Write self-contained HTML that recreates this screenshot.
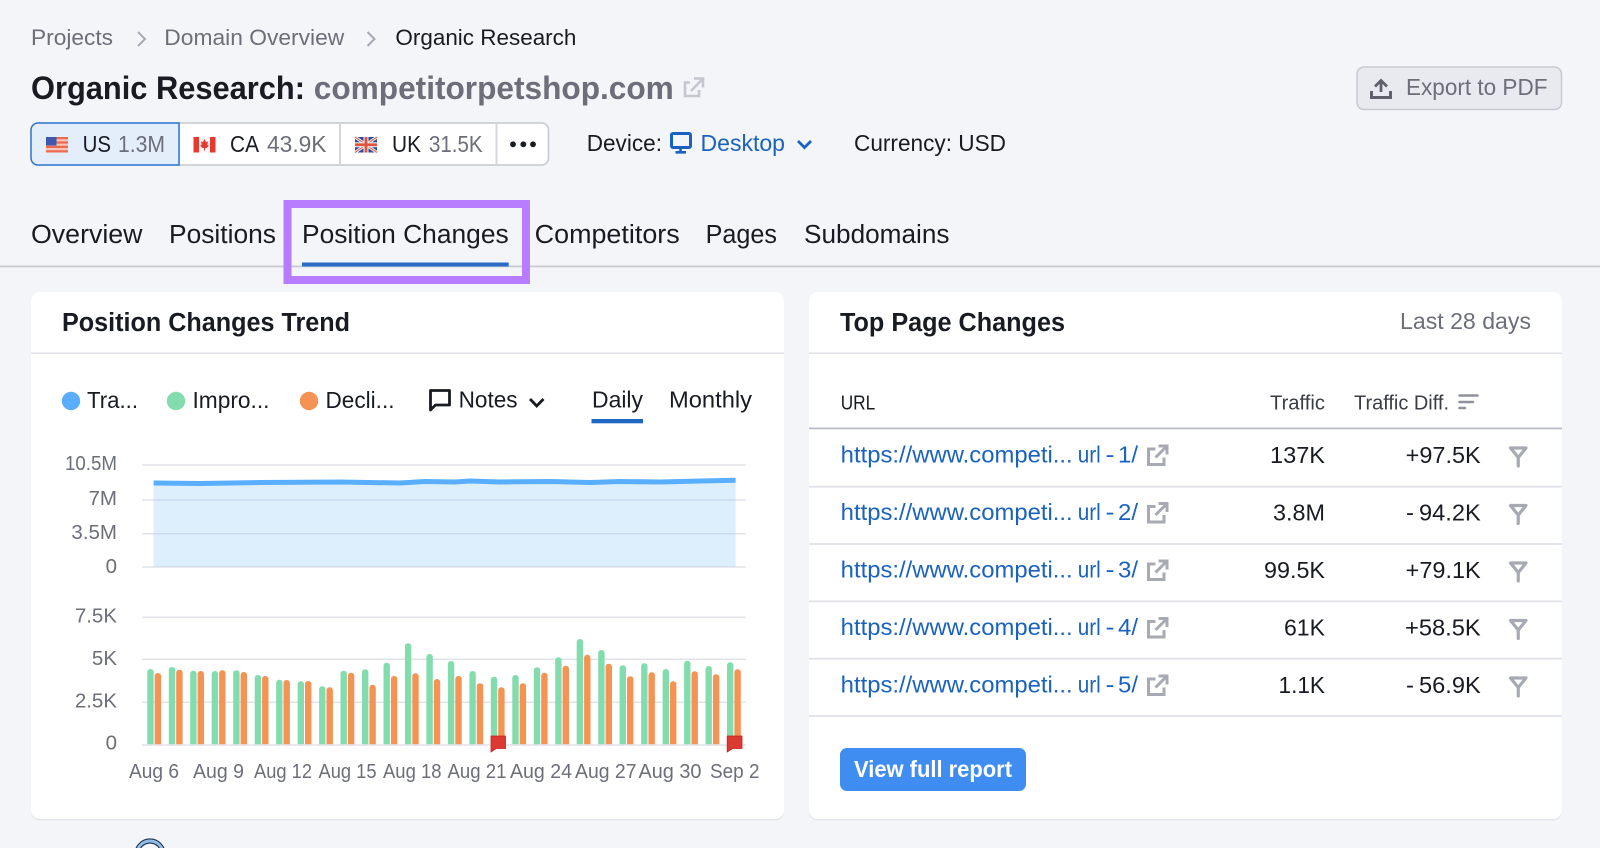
<!DOCTYPE html>
<html lang="en"><head><meta charset="utf-8"><title>Organic Research: competitorpetshop.com</title>
<style>
html,body{margin:0;padding:0;width:1600px;height:848px;overflow:hidden;background:#f4f5f9}
svg{display:block;position:absolute;left:0;top:0}
text{font-family:"Liberation Sans",sans-serif;fill:#191b23}
.b{font-size:22.5px;fill:#6c6e79}
.t{font-size:25.5px}
.h{font-size:25.5px;font-weight:700}
.c{font-size:23.5px}
.g{fill:#6c6e79}
.ax{font-size:20.5px;fill:#6c6e79}
.u{font-size:23px;fill:#1a62c0}
.v{font-size:23px;fill:#191b23}
.th{font-size:20.5px}
.ic{fill:none;stroke:#a8aab3;stroke-width:3}
</style></head><body>
<svg width="1600" height="848" viewBox="0 0 1600 848" xmlns="http://www.w3.org/2000/svg">
<defs>
<clipPath id="bc"><rect x="140" y="600" width="610" height="145"/></clipPath>
<g id="ext"><path class="ic" d="M12 2.500H20.500V11M20 3L9 14M9 5.500H2V21H17.500V14"/></g>
<g id="fil"><path d="M1.500 2H17L9.250 11.500Z M9.250 11.500V20" fill="none" stroke="#a8aab3" stroke-width="3.200" stroke-linejoin="round" stroke-linecap="round"/></g>
<g id="dash"><rect x="0" y="0" width="6" height="2" fill="#1a62c0"/></g>
</defs>

<!-- breadcrumb -->
<text class="b" x="31" y="45" textLength="82" lengthAdjust="spacingAndGlyphs">Projects</text>
<path d="M138 32L145 39L138 46" fill="none" stroke="#a8aab3" stroke-width="2"/>
<text class="b" x="164.300" y="45" textLength="180" lengthAdjust="spacingAndGlyphs">Domain Overview</text>
<path d="M367.500 32L374.500 39L367.500 46" fill="none" stroke="#a8aab3" stroke-width="2"/>
<text class="b" x="395.400" y="45" textLength="181" lengthAdjust="spacingAndGlyphs" style="fill:#191b23">Organic Research</text>

<!-- title -->
<text x="31" y="99" font-size="32.500" font-weight="700" textLength="274" lengthAdjust="spacingAndGlyphs">Organic Research:</text>
<text x="313.800" y="99" font-size="32.500" font-weight="700" textLength="360" lengthAdjust="spacingAndGlyphs" style="fill:#6c6e79">competitorpetshop.com</text>
<path d="M694 78.500H703V87.500M702.500 79L691 91M690 82.500H685V96H699V90" fill="none" stroke="#c4c7cf" stroke-width="2.600"/>

<!-- country selector -->
<rect x="31" y="123" width="517.500" height="42" rx="7" fill="#fff" stroke="#c4c7cf" stroke-width="1.500"/>
<path d="M179 123V165M340 123V165M496.500 123V165" stroke="#d5d7de" stroke-width="2"/>
<path d="M38 123H179V165H38A7 7 0 0 1 31 158V130A7 7 0 0 1 38 123Z" fill="#e4eefa" stroke="#2f77cf" stroke-width="1.500"/>
<!-- US flag -->
<rect x="46" y="137" width="22" height="15.500" fill="#f6c5b8"/>
<path d="M46 137H68V139.200H46ZM46 141.400H68V143.600H46ZM46 145.800H68V148H46ZM46 150.200H68V152.500H46Z" fill="#ec6a50"/>
<rect x="46" y="137" width="10.500" height="8.500" fill="#3f58ad"/>
<!-- CA flag -->
<rect x="193.500" y="137" width="22" height="15.500" fill="#f5f5f5"/>
<rect x="193.500" y="137" width="5.500" height="15.500" fill="#e53a2d"/>
<rect x="210" y="137" width="5.500" height="15.500" fill="#e53a2d"/>
<path d="M204.500 139L206 142L208 141.500L207.300 145L209 145.500L206.500 148H205V150.500H204V148H202.500L200 145.500L201.700 145L201 141.500L203 142Z" fill="#e53a2d"/>
<!-- UK flag -->
<rect x="355" y="137" width="22" height="15.500" fill="#2b4a9e"/>
<path d="M355 137L377 152.500M377 137L355 152.500" stroke="#eee" stroke-width="3"/>
<path d="M355 137L377 152.500M377 137L355 152.500" stroke="#e0533f" stroke-width="1"/>
<path d="M366 137V152.500M355 144.750H377" stroke="#eee" stroke-width="5"/>
<path d="M366 137V152.500M355 144.750H377" stroke="#e0533f" stroke-width="2.800"/>

<text class="c" x="82.600" y="152" textLength="28.400" lengthAdjust="spacingAndGlyphs">US</text>
<text class="c g" x="118" y="152" textLength="47" lengthAdjust="spacingAndGlyphs">1.3M</text>
<text class="c" x="230" y="152" textLength="29" lengthAdjust="spacingAndGlyphs">CA</text>
<text class="c g" x="267" y="152" textLength="59.500" lengthAdjust="spacingAndGlyphs">43.9K</text>
<text class="c" x="392" y="152" textLength="29" lengthAdjust="spacingAndGlyphs">UK</text>
<text class="c g" x="429" y="152" textLength="53.600" lengthAdjust="spacingAndGlyphs">31.5K</text>
<circle cx="513" cy="144.300" r="2.900" fill="#191b23"/><circle cx="523.300" cy="144.300" r="2.900" fill="#191b23"/><circle cx="533" cy="144.300" r="2.900" fill="#191b23"/>

<text class="c" x="586.700" y="151" textLength="75.300" lengthAdjust="spacingAndGlyphs">Device:</text>
<rect x="671.500" y="133.500" width="19" height="14" rx="1.500" fill="none" stroke="#1a62c0" stroke-width="3"/>
<path d="M680.500 148V151.500M675.500 152.300H686" stroke="#1a62c0" stroke-width="2.600"/>
<text class="c" x="700.500" y="151" textLength="84.500" lengthAdjust="spacingAndGlyphs" style="fill:#1a62c0">Desktop</text>
<path d="M798 141L804.500 147.500L811 141" fill="none" stroke="#1a62c0" stroke-width="2.800"/>
<text class="c" x="854" y="151" textLength="152" lengthAdjust="spacingAndGlyphs">Currency: USD</text>

<!-- export -->
<rect x="1357" y="67" width="204.500" height="42.500" rx="7" fill="#e9eaef" stroke="#c8cad2" stroke-width="1.500"/>
<path d="M1381 92V81M1375 86.500L1381 80.500L1387 86.500" fill="none" stroke="#5f616c" stroke-width="2.800"/>
<path d="M1371.500 91V97.500H1390.500V91" fill="none" stroke="#5f616c" stroke-width="3"/>
<text class="c g" x="1406" y="95" textLength="141.500" lengthAdjust="spacingAndGlyphs">Export to PDF</text>

<!-- tabs -->
<rect x="0" y="265.500" width="1600" height="1.800" fill="#c8cad2"/>
<rect x="287.500" y="204" width="238.500" height="76" fill="none" stroke="#b77cff" stroke-width="8"/>
<text class="t" x="31" y="243" textLength="111.500" lengthAdjust="spacingAndGlyphs">Overview</text>
<text class="t" x="169" y="243" textLength="107" lengthAdjust="spacingAndGlyphs">Positions</text>
<text class="t" x="302" y="243" textLength="206.700" lengthAdjust="spacingAndGlyphs">Position Changes</text>
<text class="t" x="534.700" y="243" textLength="145" lengthAdjust="spacingAndGlyphs">Competitors</text>
<text class="t" x="705.600" y="243" textLength="71.400" lengthAdjust="spacingAndGlyphs">Pages</text>
<text class="t" x="804" y="243" textLength="145.500" lengthAdjust="spacingAndGlyphs">Subdomains</text>
<rect x="302" y="262.500" width="206.700" height="4" fill="#2a6cc4"/>

<!-- left card -->
<rect x="31" y="293" width="753" height="526" rx="9" fill="#e4e5ea" transform="translate(0 1.500)"/>
<rect x="31" y="292" width="753" height="527" rx="9" fill="#fff"/>
<rect x="31" y="352.500" width="753" height="1.500" fill="#e0e1e9"/>
<text class="h" x="62" y="331" textLength="288" lengthAdjust="spacingAndGlyphs">Position Changes Trend</text>

<circle cx="71" cy="401" r="9.200" fill="#5aaeff"/>
<text class="c" x="87" y="408" textLength="51" lengthAdjust="spacingAndGlyphs">Tra...</text>
<circle cx="176" cy="401" r="9.200" fill="#83dcae"/>
<text class="c" x="192.500" y="408" textLength="77" lengthAdjust="spacingAndGlyphs">Impro...</text>
<circle cx="309" cy="401" r="9.200" fill="#f59354"/>
<text class="c" x="325.500" y="408" textLength="69" lengthAdjust="spacingAndGlyphs">Decli...</text>
<path d="M430.500 390.500H449.500V405H435.500L430.500 410Z" fill="none" stroke="#191b23" stroke-width="2.800" stroke-linejoin="round"/>
<text class="c" x="458.600" y="407.500" textLength="59" lengthAdjust="spacingAndGlyphs">Notes</text>
<path d="M530 399L536.700 406L543.500 399" fill="none" stroke="#191b23" stroke-width="2.800"/>
<text class="c" x="592" y="407.500" textLength="51" lengthAdjust="spacingAndGlyphs">Daily</text>
<text class="c" x="669" y="407.500" textLength="83" lengthAdjust="spacingAndGlyphs">Monthly</text>
<rect x="591.500" y="419" width="51.500" height="4.300" fill="#1f66c4"/>

<!-- top chart -->
<path d="M142 465H746M142 500H746M142 533.700H746M142 567H746" stroke="#e2e3ea" stroke-width="1.500"/>
<path d="M153.600 483L200 483.500L260 482.500L340 482L400 483L425 481.500L455 482L470 481L500 482L550 481.500L590 482.500L620 481.500L660 482L700 481L735.600 480.200V567H153.600Z" fill="#a6d2fb" fill-opacity=".38"/>
<path d="M153.600 483L200 483.500L260 482.500L340 482L400 483L425 481.500L455 482L470 481L500 482L550 481.500L590 482.500L620 481.500L660 482L700 481L735.600 480.200" fill="none" stroke="#5aaeff" stroke-width="5"/>
<g class="ax" text-anchor="end">
<text class="ax" x="117" y="470" textLength="52" lengthAdjust="spacingAndGlyphs">10.5M</text>
<text class="ax" x="117" y="505">7M</text>
<text class="ax" x="117" y="539">3.5M</text>
<text class="ax" x="117" y="573">0</text>
<text class="ax" x="117" y="622.500">7.5K</text>
<text class="ax" x="117" y="665">5K</text>
<text class="ax" x="117" y="707.700">2.5K</text>
<text class="ax" x="117" y="749.500">0</text>
</g>

<!-- bottom chart -->
<path d="M142 617.300H746M142 659.300H746M142 702.300H746" stroke="#e2e3ea" stroke-width="1.500"/>
<g clip-path="url(#bc)">
<g fill="#83dcae">
<rect x="147.300" y="669" width="6.400" height="110" rx="3"/><rect x="168.800" y="667" width="6.400" height="110" rx="3"/><rect x="190.200" y="670.700" width="6.400" height="110" rx="3"/><rect x="211.700" y="671" width="6.400" height="110" rx="3"/><rect x="233.200" y="670.300" width="6.400" height="110" rx="3"/><rect x="254.700" y="675" width="6.400" height="110" rx="3"/><rect x="276.100" y="679.700" width="6.400" height="110" rx="3"/><rect x="297.600" y="681.300" width="6.400" height="110" rx="3"/><rect x="319.100" y="686.300" width="6.400" height="110" rx="3"/><rect x="340.500" y="670.700" width="6.400" height="110" rx="3"/><rect x="362" y="669.300" width="6.400" height="110" rx="3"/><rect x="383.500" y="662.700" width="6.400" height="110" rx="3"/><rect x="404.900" y="643.300" width="6.400" height="110" rx="3"/><rect x="426.400" y="654" width="6.400" height="110" rx="3"/><rect x="447.900" y="661" width="6.400" height="110" rx="3"/><rect x="469.400" y="671" width="6.400" height="110" rx="3"/><rect x="490.800" y="676.700" width="6.400" height="110" rx="3"/><rect x="512.300" y="675" width="6.400" height="110" rx="3"/><rect x="533.800" y="667.300" width="6.400" height="110" rx="3"/><rect x="555.200" y="657.300" width="6.400" height="110" rx="3"/><rect x="576.700" y="639" width="6.400" height="110" rx="3"/><rect x="598.200" y="650" width="6.400" height="110" rx="3"/><rect x="619.600" y="665.300" width="6.400" height="110" rx="3"/><rect x="641.100" y="663.300" width="6.400" height="110" rx="3"/><rect x="662.600" y="669" width="6.400" height="110" rx="3"/><rect x="684.100" y="660.700" width="6.400" height="110" rx="3"/><rect x="705.500" y="666" width="6.400" height="110" rx="3"/><rect x="727" y="662.300" width="6.400" height="110" rx="3"/>
</g>
<g fill="#f59354">
<rect x="154.700" y="673" width="6.400" height="110" rx="3"/><rect x="176.200" y="669.700" width="6.400" height="110" rx="3"/><rect x="197.600" y="671" width="6.400" height="110" rx="3"/><rect x="219.100" y="670.300" width="6.400" height="110" rx="3"/><rect x="240.600" y="672" width="6.400" height="110" rx="3"/><rect x="262.100" y="676" width="6.400" height="110" rx="3"/><rect x="283.500" y="680" width="6.400" height="110" rx="3"/><rect x="305" y="681" width="6.400" height="110" rx="3"/><rect x="326.500" y="687.300" width="6.400" height="110" rx="3"/><rect x="347.900" y="672.700" width="6.400" height="110" rx="3"/><rect x="369.400" y="684.700" width="6.400" height="110" rx="3"/><rect x="390.900" y="676" width="6.400" height="110" rx="3"/><rect x="412.300" y="673.300" width="6.400" height="110" rx="3"/><rect x="433.800" y="679" width="6.400" height="110" rx="3"/><rect x="455.300" y="676" width="6.400" height="110" rx="3"/><rect x="476.800" y="683.300" width="6.400" height="110" rx="3"/><rect x="498.200" y="687.300" width="6.400" height="110" rx="3"/><rect x="519.700" y="683.300" width="6.400" height="110" rx="3"/><rect x="541.200" y="672.700" width="6.400" height="110" rx="3"/><rect x="562.600" y="665.700" width="6.400" height="110" rx="3"/><rect x="584.100" y="654.700" width="6.400" height="110" rx="3"/><rect x="605.600" y="663.700" width="6.400" height="110" rx="3"/><rect x="627" y="676.300" width="6.400" height="110" rx="3"/><rect x="648.500" y="672.300" width="6.400" height="110" rx="3"/><rect x="670" y="681.300" width="6.400" height="110" rx="3"/><rect x="691.500" y="671.300" width="6.400" height="110" rx="3"/><rect x="712.900" y="674.300" width="6.400" height="110" rx="3"/><rect x="734.400" y="669.300" width="6.400" height="110" rx="3"/>
</g>
</g>
<rect x="142" y="744.200" width="604" height="1.600" fill="#e2e3ea"/>
<path d="M491 736H505.500V748.500H496L491 752Z" fill="#db3a32" stroke="#cf1c1c" stroke-width=".8"/>
<path d="M727.200 736H742V748.500H732.500L727.200 752Z" fill="#db3a32" stroke="#cf1c1c" stroke-width=".8"/>

<text class="ax" x="129" y="778" textLength="50" lengthAdjust="spacingAndGlyphs">Aug 6</text>
<text class="ax" x="193" y="778" textLength="51" lengthAdjust="spacingAndGlyphs">Aug 9</text>
<text class="ax" x="254" y="778" textLength="58" lengthAdjust="spacingAndGlyphs">Aug 12</text>
<text class="ax" x="318.500" y="778" textLength="58" lengthAdjust="spacingAndGlyphs">Aug 15</text>
<text class="ax" x="383" y="778" textLength="58.500" lengthAdjust="spacingAndGlyphs">Aug 18</text>
<text class="ax" x="447.500" y="778" textLength="59" lengthAdjust="spacingAndGlyphs">Aug 21</text>
<text class="ax" x="510" y="778" textLength="62" lengthAdjust="spacingAndGlyphs">Aug 24</text>
<text class="ax" x="575" y="778" textLength="61.500" lengthAdjust="spacingAndGlyphs">Aug 27</text>
<text class="ax" x="638.500" y="778" textLength="63" lengthAdjust="spacingAndGlyphs">Aug 30</text>
<text class="ax" x="710" y="778" textLength="49.500" lengthAdjust="spacingAndGlyphs">Sep 2</text>

<!-- right card -->
<rect x="809" y="293.500" width="753" height="527" rx="9" fill="#e4e5ea"/>
<rect x="809" y="292" width="753" height="527" rx="9" fill="#fff"/>
<rect x="809" y="352.500" width="753" height="1.500" fill="#e0e1e9"/>
<text class="h" x="840" y="331" textLength="225" lengthAdjust="spacingAndGlyphs">Top Page Changes</text>
<text class="c g" x="1400" y="329" textLength="131" lengthAdjust="spacingAndGlyphs">Last 28 days</text>

<text class="th" x="840.700" y="409.500" textLength="34.500" lengthAdjust="spacingAndGlyphs">URL</text>
<text class="th" x="1270" y="409.500" textLength="55" lengthAdjust="spacingAndGlyphs" style="fill:#3a3c46">Traffic</text>
<text class="th" x="1354" y="409.500" textLength="95" lengthAdjust="spacingAndGlyphs" style="fill:#3a3c46">Traffic Diff.</text>
<path d="M1459.500 395.500H1477.500M1459.500 402H1473M1459.500 408H1465" stroke="#8f919c" stroke-width="2.500" stroke-linecap="round"/>
<rect x="809" y="427.500" width="753" height="1.800" fill="#b9bbc6"/>
<path d="M809 486.700H1562M809 544H1562M809 601.400H1562M809 658.700H1562M809 716H1562" stroke="#e0e1e9" stroke-width="1.800"/>

<text class="u" x="840.700" y="462.700" textLength="232" lengthAdjust="spacingAndGlyphs">https://www.competi...</text><text class="u" x="1077.700" y="462.700" textLength="23" lengthAdjust="spacingAndGlyphs">url</text><text class="u" x="1105.500" y="462.700" textLength="9" lengthAdjust="spacingAndGlyphs">-</text><text class="u" x="1118" y="462.700" textLength="20" lengthAdjust="spacingAndGlyphs">1/</text>
<text class="u" x="840.700" y="520.200" textLength="232" lengthAdjust="spacingAndGlyphs">https://www.competi...</text><text class="u" x="1077.700" y="520.200" textLength="23" lengthAdjust="spacingAndGlyphs">url</text><text class="u" x="1105.500" y="520.200" textLength="9" lengthAdjust="spacingAndGlyphs">-</text><text class="u" x="1118" y="520.200" textLength="20" lengthAdjust="spacingAndGlyphs">2/</text>
<text class="u" x="840.700" y="577.700" textLength="232" lengthAdjust="spacingAndGlyphs">https://www.competi...</text><text class="u" x="1077.700" y="577.700" textLength="23" lengthAdjust="spacingAndGlyphs">url</text><text class="u" x="1105.500" y="577.700" textLength="9" lengthAdjust="spacingAndGlyphs">-</text><text class="u" x="1118" y="577.700" textLength="20" lengthAdjust="spacingAndGlyphs">3/</text>
<text class="u" x="840.700" y="635.200" textLength="232" lengthAdjust="spacingAndGlyphs">https://www.competi...</text><text class="u" x="1077.700" y="635.200" textLength="23" lengthAdjust="spacingAndGlyphs">url</text><text class="u" x="1105.500" y="635.200" textLength="9" lengthAdjust="spacingAndGlyphs">-</text><text class="u" x="1118" y="635.200" textLength="20" lengthAdjust="spacingAndGlyphs">4/</text>
<text class="u" x="840.700" y="692.700" textLength="232" lengthAdjust="spacingAndGlyphs">https://www.competi...</text><text class="u" x="1077.700" y="692.700" textLength="23" lengthAdjust="spacingAndGlyphs">url</text><text class="u" x="1105.500" y="692.700" textLength="9" lengthAdjust="spacingAndGlyphs">-</text><text class="u" x="1118" y="692.700" textLength="20" lengthAdjust="spacingAndGlyphs">5/</text>
<use href="#ext" x="1146.500" y="443.500"/>
<use href="#ext" x="1146.500" y="501"/>
<use href="#ext" x="1146.500" y="558.500"/>
<use href="#ext" x="1146.500" y="616"/>
<use href="#ext" x="1146.500" y="673.500"/>

<text class="v" x="1270" y="463" textLength="55" lengthAdjust="spacingAndGlyphs">137K</text>
<text class="v" x="1273" y="520.500" textLength="52" lengthAdjust="spacingAndGlyphs">3.8M</text>
<text class="v" x="1264" y="578" textLength="61" lengthAdjust="spacingAndGlyphs">99.5K</text>
<text class="v" x="1284" y="635.500" textLength="41" lengthAdjust="spacingAndGlyphs">61K</text>
<text class="v" x="1278.500" y="693" textLength="46.500" lengthAdjust="spacingAndGlyphs">1.1K</text>

<text class="v" x="1405.700" y="463" textLength="75" lengthAdjust="spacingAndGlyphs">+97.5K</text>
<text class="v" x="1406" y="520.500" textLength="8" lengthAdjust="spacingAndGlyphs">-</text><text class="v" x="1419" y="520.500" textLength="61.700" lengthAdjust="spacingAndGlyphs">94.2K</text>
<text class="v" x="1405.700" y="578" textLength="75" lengthAdjust="spacingAndGlyphs">+79.1K</text>
<text class="v" x="1405" y="635.500" textLength="75.700" lengthAdjust="spacingAndGlyphs">+58.5K</text>
<text class="v" x="1406" y="693" textLength="8" lengthAdjust="spacingAndGlyphs">-</text><text class="v" x="1419" y="693" textLength="61.700" lengthAdjust="spacingAndGlyphs">56.9K</text>

<use href="#fil" x="1509" y="446"/>
<use href="#fil" x="1509" y="503.500"/>
<use href="#fil" x="1509" y="561"/>
<use href="#fil" x="1509" y="618.500"/>
<use href="#fil" x="1509" y="676"/>

<rect x="840" y="748" width="186" height="43" rx="7" fill="#3f8df0"/>
<text x="854" y="777" font-size="23.500" font-weight="700" textLength="158" lengthAdjust="spacingAndGlyphs" style="fill:#fff">View full report</text>

<!-- bottom clipped ring -->
<circle cx="150" cy="854" r="15" fill="#f4f5f9" stroke="#1d3557" stroke-width="1.200"/>
<circle cx="150" cy="854" r="13" fill="none" stroke="#8fbde8" stroke-width="2.500"/>
<circle cx="150" cy="854" r="11" fill="#f4f5f9" stroke="#1d3557" stroke-width="1.200"/>
</svg>
</body></html>
